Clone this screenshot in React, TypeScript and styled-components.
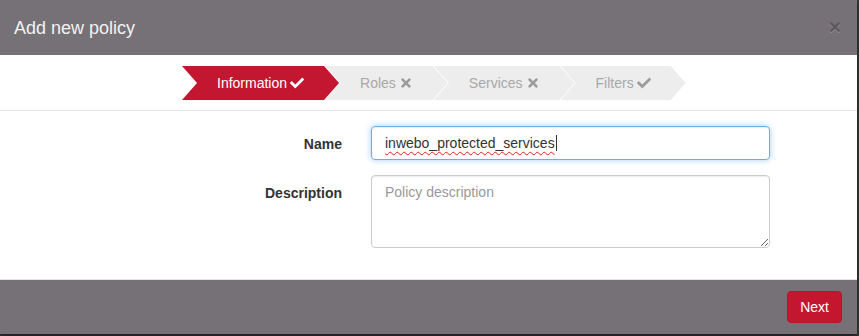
import React from "react";
import styled, { createGlobalStyle } from "styled-components";
import { FaCheck, FaTimes } from "react-icons/fa";

const Global = createGlobalStyle`
  html, body { margin: 0; padding: 0; }
  body {
    background: #3b3739;
    font-family: "Liberation Sans", Arial, Helvetica, sans-serif;
    font-size: 14px;
    color: #333;
    width: 859px;
    height: 336px;
    overflow: hidden;
  }
  * { box-sizing: border-box; }
`;

const Modal = styled.div`
  width: 857px;
  display: flex;
  flex-direction: column;
  background: #fff;
  box-shadow: 0 3px 6px rgba(0, 0, 0, 0.5);
`;

const Header = styled.div`
  height: 55px;
  background: #767176;
  display: flex;
  align-items: center;
  justify-content: space-between;
  padding: 0 15px 0 14px;
`;

const Title = styled.h4`
  margin: 0;
  font-size: 18px;
  font-weight: normal;
  color: #f2f2f2;
  line-height: 1;
  padding-top: 1px;
`;

const Close = styled.button`
  border: 0;
  background: transparent;
  padding: 0;
  font-family: "Liberation Sans", Arial, sans-serif;
  font-size: 21px;
  font-weight: bold;
  line-height: 1;
  color: #000;
  opacity: 0.22;
  text-shadow: 0 1px 0 #fff;
  margin-top: -3px;
  margin-right: 1px;
`;

const StepBar = styled.div`
  display: flex;
  justify-content: flex-start;
  padding: 11px 0 10px 182px;
  border-bottom: 1px solid #e5e5e5;
`;

const Step = styled.div<{ $active?: boolean }>`
  height: 34px;
  padding: 0 35px;
  display: flex;
  align-items: center;
  gap: 3px;
  white-space: nowrap;
  font-size: 14px;
  background: ${(p) => (p.$active ? "#c31731" : "#ededed")};
  color: ${(p) => (p.$active ? "#ffffff" : "#a8a8a8")};
  clip-path: polygon(
    0 0,
    calc(100% - 15px) 0,
    100% 50%,
    calc(100% - 15px) 100%,
    0 100%,
    15px 50%
  );
  & + & {
    margin-left: -14px;
  }
  svg {
    width: 14px;
    height: 14px;
    color: ${(p) => (p.$active ? "#ffffff" : "#9c9c9c")};
  }
`;

const Body = styled.div`
  padding: 15px 0 31px;
  border-bottom: 1px solid #e5e5e5;
  display: flex;
  flex-direction: column;
  gap: 15px;
`;

const Row = styled.div`
  display: grid;
  grid-template-columns: 342px 399px;
  column-gap: 29px;
  align-items: start;
`;

const Label = styled.label`
  text-align: right;
  font-weight: bold;
  font-size: 14px;
  color: #333;
  padding-top: 8px;
  line-height: 20px;
`;

const FieldBox = styled.div<{ $focused?: boolean }>`
  height: 34px;
  width: 100%;
  padding: 6px 13px;
  display: flex;
  align-items: center;
  font-size: 14px;
  color: #333;
  border-radius: 4px;
  border: 1px solid ${(p) => (p.$focused ? "#66afe9" : "#ccc")};
  box-shadow: ${(p) =>
    p.$focused
      ? "inset 0 1px 1px rgba(0,0,0,.075), 0 0 6px rgba(102,175,233,.6)"
      : "inset 0 1px 1px rgba(0,0,0,.075)"};
`;

const Misspelled = styled.span`
  text-decoration: underline wavy #e02020;
  text-decoration-thickness: 1px;
  text-underline-offset: 3px;
`;

const Caret = styled.span`
  display: inline-block;
  width: 1px;
  height: 16px;
  background: #333;
  margin-left: 1px;
`;

const TextArea = styled.textarea`
  height: 73px;
  width: 100%;
  padding: 6px 13px;
  font-family: "Liberation Sans", Arial, sans-serif;
  font-size: 14px;
  line-height: 20px;
  color: #555;
  border-radius: 4px;
  border: 1px solid #ccc;
  box-shadow: inset 0 1px 1px rgba(0, 0, 0, 0.075);
  outline: none;
  resize: both;
  &::placeholder {
    color: #999;
  }
`;

const Footer = styled.div`
  height: 54px;
  background: #767176;
  display: flex;
  justify-content: flex-end;
  align-items: flex-start;
  padding: 11px 15px 0;
`;

const Button = styled.button`
  height: 32px;
  padding: 0 12px;
  background: #c4172f;
  color: #fff;
  border: 1px solid #b8142b;
  border-radius: 4px;
  font-family: "Liberation Sans", Arial, sans-serif;
  font-size: 14px;
`;

export default function App() {
  return (
    <>
      <Global />
      <Modal>
        <Header>
          <Title>Add new policy</Title>
          <Close aria-label="Close">×</Close>
        </Header>
        <StepBar>
          <Step $active>
            Information <FaCheck />
          </Step>
          <Step>
            Roles <FaTimes />
          </Step>
          <Step>
            Services <FaTimes />
          </Step>
          <Step>
            Filters <FaCheck />
          </Step>
        </StepBar>
        <Body>
          <Row>
            <Label>Name</Label>
            <FieldBox $focused role="textbox" aria-label="Name">
              <Misspelled>inwebo_protected_services</Misspelled>
              <Caret />
            </FieldBox>
          </Row>
          <Row>
            <Label>Description</Label>
            <TextArea placeholder="Policy description" />
          </Row>
        </Body>
        <Footer>
          <Button>Next</Button>
        </Footer>
      </Modal>
    </>
  );
}
